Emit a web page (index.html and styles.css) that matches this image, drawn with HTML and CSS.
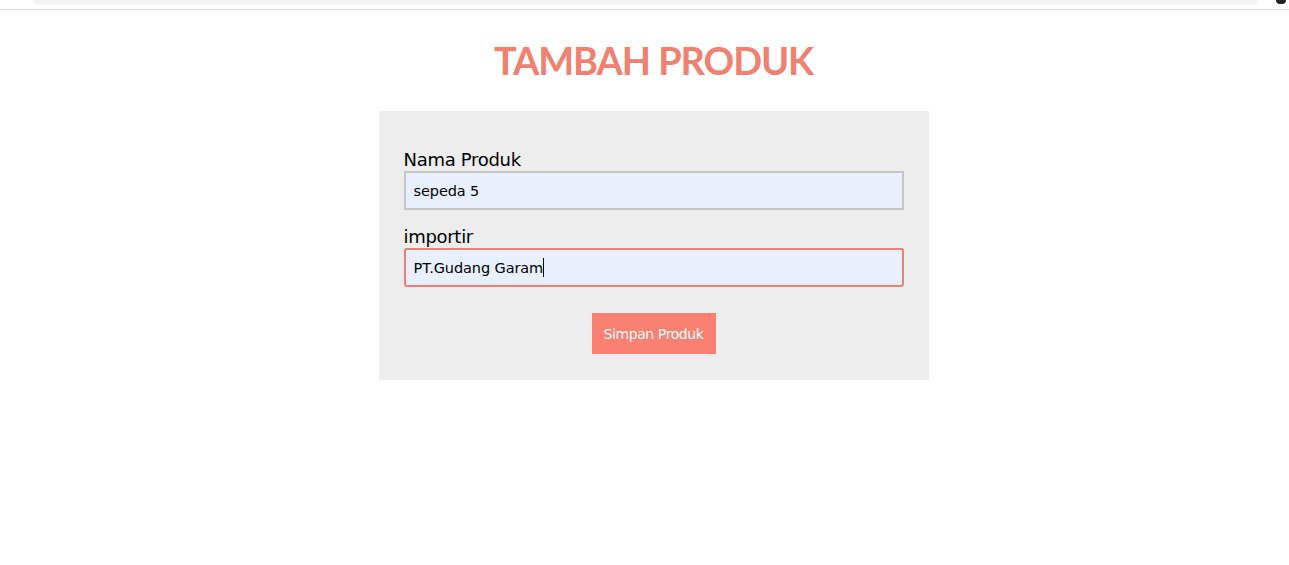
FILE: index.html
```html
<!DOCTYPE html>
<html lang="id">
<head>
<meta charset="utf-8">
<title>Tambah Produk</title>
<link rel="stylesheet" href="styles.css">
</head>
<body>
<div class="chrome"><div class="chrome-bar"></div><div class="chrome-dot"></div></div>
<main class="page">
  <h1 class="title">TAMBAH PRODUK</h1>
  <form class="card">
    <div class="field">
      <label class="label" for="nama">Nama Produk</label>
      <input class="input" id="nama" type="text" value="sepeda 5">
    </div>
    <div class="field">
      <label class="label" for="importir">importir</label>
      <div class="input input-focus" id="importir"><span>PT.Gudang Garam</span><span class="caret"></span></div>
    </div>
    <div class="actions">
      <button class="btn" type="button">Simpan Produk</button>
    </div>
  </form>
</main>
</body>
</html>
```

FILE: styles.css
```css
* { box-sizing: border-box; }
html, body { margin: 0; background: #fff; }
body { font-family: "DejaVu Sans", Verdana, sans-serif; color: #000; }

.chrome {
  height: 10px;
  border-bottom: 1px solid #dadce0;
  display: flex;
  align-items: flex-start;
  padding: 0 3px 0 33px;
}
.chrome-bar {
  flex: 1;
  height: 5px;
  background: #f1f3f4;
  border-radius: 0 0 6px 6px;
}
.chrome-dot {
  width: 10px;
  height: 4px;
  margin-left: 18px;
  background: #202124;
  border-radius: 0 0 5px 5px;
}

.page { padding-left: 18px; }

.title {
  margin: 24px 0 25px;
  text-align: center;
  font-family: Lato, "DejaVu Sans", sans-serif;
  font-weight: 700;
  font-size: 38px;
  line-height: 52px;
  color: #f08070;
  letter-spacing: -1.1px;
}

.card {
  width: 550px;
  margin: 0 auto;
  background: #ededed;
  padding: 37px 25px 26px;
  display: flex;
  flex-direction: column;
}
.field { display: flex; flex-direction: column; margin-bottom: 15px; }
.field + .field { margin-bottom: 26px; }
.label {
  font-size: 18px;
  line-height: 23px;
  letter-spacing: -0.3px;
}
.input {
  width: 500px;
  height: 39px;
  border: 2px solid #c6c6c6;
  background: #e8f0fe;
  padding: 0 8px;
  font-family: "DejaVu Sans", Verdana, sans-serif;
  font-size: 14.5px;
  color: #000;
  outline: none;
  letter-spacing: -0.1px;
}
.input-focus {
  display: flex;
  align-items: center;
  border: 2px solid #ee8070;
  border-radius: 3px;
}
.caret {
  display: inline-block;
  width: 1px;
  height: 19px;
  background: #000;
}
.actions { display: flex; justify-content: center; }
.btn {
  width: 124px;
  height: 41px;
  border: none;
  background: #fa8072;
  color: #fff;
  font-family: "DejaVu Sans", Verdana, sans-serif;
  font-size: 14px;
  letter-spacing: -0.4px;
  padding: 0;
}
```
